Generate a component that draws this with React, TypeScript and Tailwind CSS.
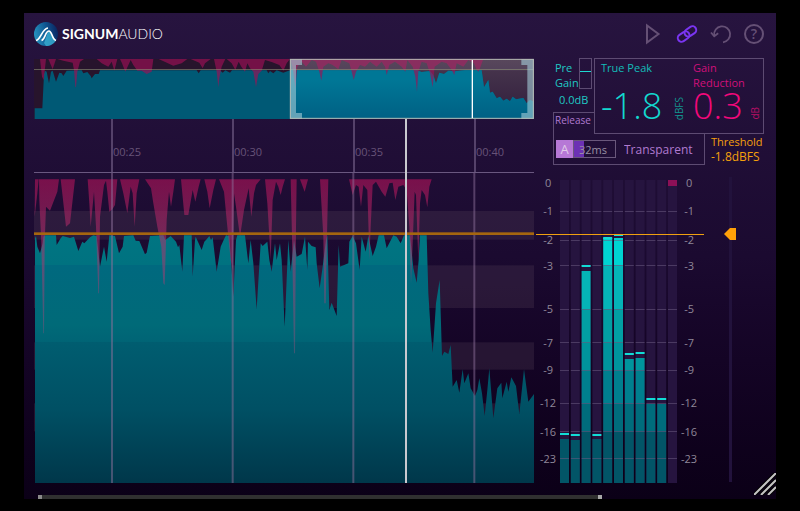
import React from "react";

const LEVEL_OUTLINE =
  "45,969 45,235 48,228 52,260 60,280 68,250 70,230 75,226 108,226 110,255 122,235 128,228 150,234 162,230 175,273 187,245 193,250 210,232 220,226 230,228 240,320 252,260 260,305 268,226 285,228 297,280 308,260 312,228 340,226 347,242 358,243 375,283 380,278 390,228 430,226 436,240 452,228 468,245 474,262 478,255 487,335 492,226 515,226 518,350 525,240 527,230 545,270 553,245 560,238 568,228 573,240 578,232 590,335 602,260 612,238 618,226 628,228 633,300 640,410 648,240 652,226 675,226 685,310 692,240 700,310 710,448 722,250 728,258 742,245 748,300 755,335 765,250 770,300 780,250 785,300 794,500 805,240 812,335 822,240 830,290 845,282 855,230 862,330 864,245 875,258 887,262 890,310 899,385 908,320 918,240 922,226 928,450 935,428 950,468 956,255 960,320 985,310 988,245 998,228 1008,250 1019,330 1025,230 1037,275 1045,228 1058,288 1068,260 1076,226 1092,226 1100,265 1120,226 1130,230 1142,250 1152,226 1170,226 1180,325 1190,368 1196,300 1200,226 1220,226 1225,400 1232,510 1238,578 1248,430 1259,360 1266,588 1273,575 1285,582 1292,555 1298,680 1310,660 1318,698 1328,628 1333,670 1345,640 1352,685 1365,708 1372,690 1378,655 1386,700 1394,768 1402,690 1408,625 1420,775 1432,685 1444,668 1447,715 1460,665 1465,695 1474,652 1488,678 1498,762 1512,628 1525,725 1542,702 1542,969";

const REDUCTION_SHAPES = [
  "45,58 44,170 52,100 56,58",
  "57,58 117,58 112,95 90,152 78,140 74,250 72,520 70,520 64,250 58,120",
  "122,58 165,58 150,190 138,200 128,110",
  "203,58 292,58 285,135 277,148 268,155 262,95 258,62 252,75 240,170 237,400 235,400 228,200 222,95 212,200 208,130",
  "300,58 358,58 350,100 344,200 338,100 332,80 322,160 310,100",
  "375,58 465,58 460,95 453,140 447,95 440,180 434,375 430,370 424,260 412,200 400,130 393,85",
  "483,58 542,58 536,80 526,125 518,90 505,165 493,165",
  "553,58 588,58 580,90 569,145 562,95",
  "597,58 722,58 708,75 702,100 694,170 686,85 672,150 660,230 648,140 642,100 638,330 632,300 620,180 612,95",
  "735,58 795,58 788,80 782,105 775,80 768,65 758,120 752,300 748,230 742,130",
  "812,58 830,58 828,200 825,580 822,580 816,230",
  "840,58 864,58 854,95",
  "900,58 925,58 922,180 917,430 913,430 910,230",
  "987,58 1235,58 1228,80 1222,142 1215,105 1205,90 1200,130 1195,300 1192,220 1188,105 1184,95 1178,250 1173,370 1168,200 1160,90 1150,75 1135,80 1126,120 1118,68 1108,70 1096,110 1085,95 1068,65 1058,75 1052,200 1048,300 1046,220 1042,90 1030,75 1023,140 1016,80 1008,75 998,105",
];

const OVERVIEW_OUTLINE =
  "104,357 104,325 127,325 132,222 135,212 140,215 147,250 153,215 158,212 168,245 178,218 185,220 190,228 200,212 245,211 250,220 262,216 272,228 275,235 285,222 296,222 300,211 590,211 596,220 602,211 660,211 668,218 676,211 690,218 696,211 800,211 805,220 810,213 820,220 830,211 850,218 870,211 1250,211 1265,216 1290,213 1300,225 1308,250 1318,218 1332,222 1345,212 1365,214 1395,211 1445,211 1452,262 1465,240 1470,278 1478,275 1490,295 1500,290 1510,302 1520,296 1530,304 1538,290 1548,298 1570,294 1580,310 1590,300 1602,305 1602,357";

const OVERVIEW_REDUCTION = [
  "120,177 138,177 131,240 126,230",
  "145,177 168,177 158,208",
  "172,177 252,177 240,185 232,215 228,262 226,260 222,210 218,188 190,182",
  "290,177 352,177 343,212 335,185 325,200 305,190",
  "360,177 460,177 455,215 440,222 425,212 412,212 400,195 392,180 376,215 366,190",
  "476,177 562,177 545,190 520,197",
  "572,177 632,177 615,190 608,205 598,188",
  "642,177 676,177 665,200 658,235 655,262 650,215",
  "680,177 870,177 860,190 850,212 838,195 815,186 795,180 785,212 775,222 768,262 760,215 750,205 742,190 735,215 724,200 716,185 706,210 695,190",
  "870,177 1450,177 1436,215 1430,210 1422,190 1405,180 1390,200 1370,190 1363,225 1355,210 1340,190 1325,185 1304,200 1298,262 1290,220 1280,190 1265,185 1255,215 1251,275 1246,230 1238,200 1222,180 1216,215 1205,200 1185,185 1168,195 1160,225 1155,200 1145,185 1130,200 1110,185 1095,200 1080,195 1068,215 1061,240 1055,215 1048,190 1025,180 1015,208 998,195 985,190 970,200 964,242 958,215 948,185 935,180 918,200 905,185 892,200 886,265 878,200",
];

const SCALE = ["0", "-1", "-2", "-3", "-5", "-7", "-9", "-12", "-16", "-23"];
const SCALE_LINES = [211, 240, 265, 309, 342, 370, 403, 431, 458];

const BARS = [
  { level: 439, peak: 434 },
  { level: 440, peak: 435 },
  { level: 271, peak: 266 },
  { level: 439, peak: 435 },
  { level: 238, peak: 238 },
  { level: 238, peak: 235 },
  { level: 359, peak: 354 },
  { level: 358, peak: 353 },
  { level: 404, peak: 399 },
  { level: 404, peak: 399 },
  { level: 483, peak: 0 },
];

const BANDS = [
  { from: 234, to: 265, color: "#00d4d2" },
  { from: 265, to: 309, color: "#05b4b7" },
  { from: 309, to: 342, color: "#029fa3" },
  { from: 342, to: 370, color: "#00949c" },
  { from: 370, to: 403, color: "#007f8e" },
  { from: 403, to: 431, color: "#006c7c" },
  { from: 431, to: 483, color: "#025567" },
];

function Logo() {
  return (
    <div className="flex items-center gap-1">
      <svg className="size-6" viewBox="0 0 24 24" aria-hidden="true">
        <defs>
          <linearGradient id="logo" x1="0" y1="0.6" x2="1" y2="0.4">
            <stop offset="0" stopColor="#2795c0" />
            <stop offset="0.55" stopColor="#0f5590" />
            <stop offset="1" stopColor="#0a2560" />
          </linearGradient>
        </defs>
        <circle cx="12" cy="12" r="12" fill="url(#logo)" />
        <path d="M10 21c2-4 3-11 5-12 3 0 3 7 7 9-2 4-6 6-10 6z" fill="#3ab0d2" opacity="0.8" />
        <path d="M2 18.500c5-1 6-12 12-12.500" fill="none" stroke="#fff" strokeWidth="1.700" />
        <path d="M7.500 18.500c4-1 3.500-9.500 7.500-9.500 3 0 3 8.500 7 9.500" fill="none" stroke="#fff" strokeWidth="1.700" />
      </svg>
      <h1 className="font-[Lato,sans-serif] text-[14px] leading-6 text-white">
        <span className="font-bold">SIGNUM</span>
        <span className="font-light">AUDIO</span>
      </h1>
    </div>
  );
}

function Toolbar() {
  return (
    <div className="flex items-center gap-3 text-[#655075]">
      <button aria-label="Play" className="size-[22px]">
        <svg viewBox="0 0 22 22" fill="none" stroke="currentColor" strokeWidth="2">
          <path d="M5 2.500v17L16.500 11z" />
        </svg>
      </button>
      <button aria-label="Link channels" className="size-[22px] text-[#7a35f0]">
        <svg viewBox="0 0 22 22" fill="none" stroke="currentColor" strokeWidth="2">
          <g transform="rotate(-34 11 11)">
            <rect x="0.5" y="7.500" width="12.500" height="7.500" rx="3.750" />
            <rect x="9" y="7" width="12.500" height="7.500" rx="3.750" />
          </g>
        </svg>
      </button>
      <button aria-label="Reset" className="size-[22px]">
        <svg viewBox="0 0 22 22" fill="none" stroke="currentColor" strokeWidth="1.800">
          <path d="M4.200 12.500a8 8 0 1 1 8.800 6.800" />
          <path d="M1 9.500l3.200 3.800 4-3" />
        </svg>
      </button>
      <button
        aria-label="Help"
        className="flex size-5 items-center justify-center rounded-full border-2 border-current text-[14px] font-semibold leading-4"
      >
        ?
      </button>
    </div>
  );
}

function Overview() {
  return (
    <svg className="block h-[61px] w-full" viewBox="102 174 1500 183" preserveAspectRatio="none" role="img" aria-label="Overview">
      <defs>
        <linearGradient id="ov" x1="0" y1="0" x2="0" y2="1">
          <stop offset="0.2" stopColor="#007796" />
          <stop offset="1" stopColor="#006084" />
        </linearGradient>
        <linearGradient id="ovbg" x1="0" y1="0" x2="0" y2="1">
          <stop offset="0" stopColor="#4a384f" />
          <stop offset="1" stopColor="#301d3c" />
        </linearGradient>
        <clipPath id="sel">
          <rect x="870" y="174" width="732" height="183" />
        </clipPath>
      </defs>
      <rect x="102" y="177" width="768" height="180" fill="#27142c" />
      <rect x="870" y="177" width="732" height="180" fill="url(#ovbg)" />
      <polygon points={OVERVIEW_OUTLINE} fill="#005975" />
      <polygon points={OVERVIEW_OUTLINE} fill="url(#ov)" clipPath="url(#sel)" />
      <g fill="#9c1155" fillOpacity="0.66">
        {OVERVIEW_REDUCTION.map((points) => (
          <polygon key={points} points={points} />
        ))}
      </g>
      <rect x="870" y="177" width="732" height="34" fill="#fff" fillOpacity="0.08" />
      <rect x="102" y="207" width="1500" height="3" fill="#8a8f74" fillOpacity="0.6" />
      <g fill="#a5cdd9" fillOpacity="0.6">
        <path d="M870 177h36v18h-18v144h18v18h-36z" />
        <path d="M1602 177h-38v18h18v144h-18v18h38z" />
      </g>
      <rect x="871" y="178" width="729" height="177" fill="none" stroke="#b5bab4" strokeWidth="3" />
      <rect x="1415" y="180" width="4" height="174" fill="#fff" />
    </svg>
  );
}

function Waveform() {
  return (
    <svg className="block h-[310px] w-full" viewBox="42 39 1500 930" preserveAspectRatio="none" role="img" aria-label="Level history">
      <defs>
        <linearGradient id="level" gradientUnits="userSpaceOnUse" x1="0" y1="226" x2="0" y2="969">
          <stop offset="0" stopColor="#007582" />
          <stop offset="0.12" stopColor="#007280" />
          <stop offset="0.12" stopColor="#00697f" />
          <stop offset="0.36" stopColor="#006a78" />
          <stop offset="0.43" stopColor="#006475" />
          <stop offset="0.43" stopColor="#005d70" />
          <stop offset="0.7" stopColor="#005064" />
          <stop offset="1" stopColor="#00374a" />
        </linearGradient>
        <linearGradient id="red" gradientUnits="userSpaceOnUse" x1="0" y1="58" x2="0" y2="580">
          <stop offset="0" stopColor="#b01259" stopOpacity="0.62" />
          <stop offset="0.32" stopColor="#b0306c" stopOpacity="0.55" />
          <stop offset="1" stopColor="#b05080" stopOpacity="0.35" />
        </linearGradient>
      </defs>
      <g fill="#5f4a60" fillOpacity="0.24">
        <rect x="42" y="153" width="1500" height="86" />
        <rect x="42" y="316" width="1500" height="128" />
        <rect x="42" y="547" width="1500" height="82" />
        <rect x="42" y="730" width="1500" height="84" />
      </g>
      <polygon points={LEVEL_OUTLINE} fill="url(#level)" />
      <g fill="url(#red)">
        {REDUCTION_SHAPES.map((points) => (
          <polygon key={points} points={points} />
        ))}
      </g>
      <g fill="#8c7099" fillOpacity="0.5">
        <rect x="273" y="39" width="6" height="930" />
        <rect x="635" y="39" width="6" height="930" />
        <rect x="997" y="39" width="6" height="930" />
        <rect x="1360" y="39" width="6" height="930" />
      </g>
      <rect x="42" y="217" width="1500" height="8" fill="#a5660f" />
    </svg>
  );
}

function Ruler() {
  return (
    <ol className="grid h-[54px] grid-cols-[77fr_121fr_121fr_121fr_60fr] border-b border-[#6a5880] text-[11px] text-[#675378]">
      <li aria-hidden="true" />
      {["00:25", "00:30", "00:35", "00:40"].map((time) => (
        <li key={time} className="flex items-center border-l-2 border-[#55426a] pt-3.5">
          {time}
        </li>
      ))}
    </ol>
  );
}

function History() {
  return (
    <section className="min-w-0 flex-1">
      <Overview />
      <div className="relative">
        <Ruler />
        <Waveform />
        <div className="absolute inset-y-0 left-[74.2%] w-0.5 bg-[#c9c9cf]" />
      </div>
    </section>
  );
}

function Readouts() {
  return (
    <div className="ml-[17px] w-[211px] text-[11px] leading-[15px]">
      <div className="flex">
        <div className="flex h-[76px] w-[41px] flex-col">
          <div className="flex h-[32px] items-start text-[#1fc8c4]">
            <label htmlFor="pregain" className="w-[26px] pl-0.5 pt-0.5">
              Pre Gain
            </label>
            <input
              id="pregain"
              type="range"
              min={0}
              max={100}
              defaultValue={56}
              className="m-0 h-[31px] w-[13px] appearance-none border border-[#5d4b72] bg-transparent [direction:rtl] [writing-mode:vertical-lr] [&::-webkit-slider-thumb]:h-px [&::-webkit-slider-thumb]:w-[11px] [&::-webkit-slider-thumb]:appearance-none [&::-webkit-slider-thumb]:rounded-none [&::-webkit-slider-thumb]:border-0 [&::-webkit-slider-thumb]:bg-[#1fd8d2]"
            />
          </div>
          <output htmlFor="pregain" className="h-[22px] pl-1.5 pt-0.5 text-[#1fc8c4]">
            0.0dB
          </output>
          <div className="flex-1 border-l border-t border-[#5d4b72] pl-px text-[10px] text-[#b07ad0]">Release</div>
        </div>
        <div className="flex h-[76px] flex-1 justify-between border border-[#5d4b72] pl-1.5">
          <div className="w-[84px] text-[#12bdb8]">
            <h2 className="pt-px">True Peak</h2>
            <p className="mt-[17px] flex items-end justify-between text-4xl font-light leading-7 text-[#12d8cf]">
              -1.8
              <span className="rotate-180 text-[10px] font-normal leading-3 text-[#12958f] [writing-mode:vertical-rl]">dBFS</span>
            </p>
          </div>
          <div className="w-[70px] text-[#d0107a]">
            <h2 className="pt-px">Gain Reduction</h2>
            <p className="mt-0.5 flex items-end justify-between pr-0.5 text-4xl font-light leading-7 text-[#f2087a]">
              0.3
              <span className="rotate-180 text-[10px] font-normal leading-3 text-[#b80f66] [writing-mode:vertical-rl]">dB</span>
            </p>
          </div>
        </div>
      </div>
      <div className="flex h-[31px]">
        <div className="flex w-[152px] items-center border-x border-b border-[#5d4b72] pl-0.5">
          <button aria-label="Auto release" aria-pressed="true" className="h-[18px] w-[17px] bg-[#b678d6] text-[13px] text-[#e0cbe8]">
            A
          </button>
          <input
            aria-label="Release time"
            defaultValue="32ms"
            className="h-[18px] w-[43px] border border-[#6a587c] bg-[linear-gradient(90deg,#6c31b4_10px,transparent_10px)] pl-[5px] text-[11px] text-[#9a90a4]"
          />
          <select aria-label="Release mode" className="ml-2 w-[78px] appearance-none bg-transparent pt-0.5 text-xs text-[#b07ad0]">
            <option>Transparent</option>
          </select>
        </div>
        <div className="pl-1.5 text-[#f5a00c]">
          <label htmlFor="threshold" className="block">
            Threshold
          </label>
          <output htmlFor="threshold" className="block text-xs leading-4">
            -1.8dBFS
          </output>
        </div>
      </div>
    </div>
  );
}

function Scale() {
  return (
    <ol className="grid w-4 grid-rows-[28px_29px_26px_43px_34px_27px_33px_29px_27px_16px] justify-items-center text-[11px] leading-4 text-[#8f8798]">
      {SCALE.map((mark) => (
        <li key={mark}>{mark}</li>
      ))}
    </ol>
  );
}

function Meter() {
  return (
    <svg className="mt-[5px] block h-[303px] w-[117px]" viewBox="0 180 117 303" preserveAspectRatio="none" role="img" aria-label="Channel levels">
      {BARS.map((bar, i) => {
        const x = i * 10.8;
        return (
          <g key={i}>
            <rect x={x} y="180" width="9" height="303" fill="#26143f" />
            {BANDS.filter((band) => band.to > bar.level).map((band) => {
              const top = Math.max(band.from, bar.level);
              return <rect key={band.from} x={x} y={top} width="9" height={band.to - top} fill={band.color} />;
            })}
            {SCALE_LINES.map((y) => (
              <rect key={y} x={x} y={y} width="9" height="1" fill="#6a5a80" fillOpacity="0.55" />
            ))}
            {bar.peak > 0 && <rect x={x} y={bar.peak - 1} width="9" height="2" fill="#12dcd6" />}
          </g>
        );
      })}
      <rect x="108" y="180" width="9" height="6" fill="#8c1057" />
    </svg>
  );
}

export default function App() {
  return (
    <main className="min-h-screen bg-black px-6 pt-[13px] font-['Open_Sans','Noto_Sans',sans-serif]">
      <div className="relative bg-linear-to-b from-[#27143f] via-[#1b0a30] to-[#0b0017]">
        <header className="flex h-[45px] items-center justify-between pb-[3px] pl-2.5 pr-3">
          <Logo />
          <Toolbar />
        </header>
        <div className="flex pl-2.5">
          <History />
          <aside className="flex w-[242px] flex-col pl-0.5" aria-label="Levels">
            <Readouts />
            <div className="flex justify-between pr-10 pt-2.5">
              <div className="relative flex w-[168px] gap-1 pl-1">
                <Scale />
                <Meter />
                <Scale />
                <div className="absolute inset-x-0 top-[59px] h-px bg-[#f0a010]" />
              </div>
              <input
                id="threshold"
                type="range"
                min={0}
                max={1000}
                defaultValue={826}
                className="m-0 mt-0.5 h-[305px] w-3 appearance-none bg-[linear-gradient(#22123c,#22123c)] bg-[length:3px_100%] bg-center bg-no-repeat [direction:rtl] [writing-mode:vertical-lr] [&::-webkit-slider-thumb]:size-3 [&::-webkit-slider-thumb]:appearance-none [&::-webkit-slider-thumb]:bg-[#ffa008] [&::-webkit-slider-thumb]:[clip-path:polygon(0_50%,50%_0,100%_0,100%_100%,50%_100%)]"
              />
            </div>
          </aside>
        </div>
        <footer className="pt-3">
          <div className="ml-3.5 flex h-1 w-[75%] justify-between bg-[#303030]">
            <span className="w-1 bg-[#8a8a8a]" />
            <span className="w-1 bg-[#a8a8a8]" />
          </div>
        </footer>
        <svg className="absolute bottom-1 right-0 size-[22px]" viewBox="0 0 22 22" fill="none" aria-hidden="true">
          <path d="M0 22L22 0M7 22L22 7M14 22l8-8" stroke="#000" strokeWidth="4" />
          <path d="M0 22L22 0M7 22L22 7M14 22l8-8" stroke="#c4c4c4" strokeWidth="2" />
        </svg>
      </div>
    </main>
  );
}
